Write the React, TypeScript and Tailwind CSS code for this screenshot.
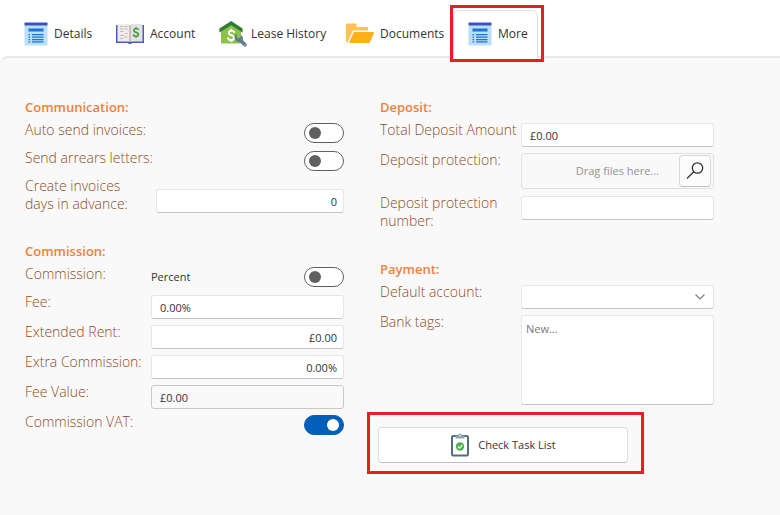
import { useState } from 'react';
import type { ReactNode } from 'react';

const fieldClass =
  'block h-6 w-full rounded-[3px] border border-[#e6e6e6] border-b-[#c4c4c4] bg-white px-2 text-[11px] text-[#333333] outline-none';

function DetailsIcon() {
  return (
    <svg className="h-6 w-6 shrink-0" viewBox="0 0 24 24">
      <path fill="#bbdefb" d="M0.5 3h23v20.5h-23z" />
      <path fill="#3f51b5" d="M0.5 0.5h23v3h-23z" />
      <path fill="#1976d2" d="M4.5 6.5h15v3h-15z" />
      <path fill="#1976d2" d="M8 12h11.500v1.300H8zM8 14.500h11.500v1.300H8zM8 17h11.500v1.300H8zM8 19.300h11.500v1.200H8z" />
      <path fill="#1976d2" d="M4.500 12h1.600v1.300H4.500zM4.500 14.500h1.600v1.300H4.500zM4.500 17h1.600v1.300H4.500zM4.500 19.300h1.600v1.200H4.500z" />
    </svg>
  );
}

function AccountIcon() {
  return (
    <svg className="h-6 w-7 shrink-0" viewBox="0 0 28 24">
      <path fill="#4a5abf" d="M0 3h28v18H16c-.4 1.300-3.600 1.300-4 0H0z" />
      <path fill="#efebe9" d="M1.500 2h11l1.500 1v17l-1.500-.5h-11z" />
      <path fill="#e6e2e1" d="M26.500 2h-11L14 3v17l1.500-.5h11z" />
      <path fill="#b09a92" d="M13.500 3h1v17h-1z" />
      <path
        fill="none"
        stroke="#c4b8b4"
        strokeWidth="1"
        d="M4 4.500h3.500M8.500 4.500h3M4 7h3.500M8.500 7h3M4 9.500h3.500M4 13.500h4M9 11.500h2.500M4 16.500h3M8.500 15h3"
      />
      <path
        fill="none"
        stroke="#43a047"
        strokeWidth="1.700"
        d="M22.500 8c-.3-1-1-1.500-2.300-1.500-3 0-3 3.200-.2 3.800 3.200.7 3.200 4-.1 4-1.500 0-2.300-.7-2.500-1.900M20.100 5v1.500M20.100 14.300v1.500"
      />
    </svg>
  );
}

function HouseIcon() {
  return (
    <svg className="-mr-0.5 h-7 w-7 shrink-0" viewBox="0 0 28 28">
      <path fill="#8bc34a" d="M2 10L12.500 3 22 10v13.500H2z" />
      <path fill="#2e7d32" d="M12.200 1L.4 8.400v4L12.200 5.200l11.400 7.200v-4z" />
      <path
        fill="none"
        stroke="#fff"
        strokeWidth="2"
        d="M15.300 12.800c-.3-1.400-1.200-2-2.800-2-3.400 0-3.300 3.600-.3 4.300 3.800.9 3.600 5-.1 5-1.900 0-3-.9-3.200-2.500M12.300 8.700v2M12.300 20v2"
      />
      <path
        fill="#607d8b"
        d="M15.500 16.300a4.500 4.500 0 0 1 2.200-2.200v3l1.800 1.300 2.500-1.500-.2-2.200c2 1.300 2.600 3.300 1.900 5.200l4 4.200c.5 2-1 3.300-2.600 2.400l-4.200-4.300c-3.200.5-5.400-2.200-5.400-5.900z"
      />
      <circle cx="25.800" cy="25" r=".7" fill="#b0bec5" />
    </svg>
  );
}

function FolderIcon() {
  return (
    <svg className="h-6 w-7 shrink-0" viewBox="0 0 28 24">
      <path fill="#ffc353" d="M0 2.500C0 1.900.4 1.500 1 1.500h8.500c.6 0 1 .4 1 1V5H21c.7 0 1.200.4 1.200 1v2.500H7L1.500 20.500C.5 20.300 0 19.900 0 19z" />
      <path fill="#ffb019" d="M7.800 10H27c.8 0 1.200.5.9 1.200l-4 9c-.2.600-.6.900-1.200.9H2.800z" />
    </svg>
  );
}

function TaskIcon() {
  return (
    <svg className="h-6 w-5 shrink-0" viewBox="0 0 20 24">
      <rect x="2" y="3" width="16" height="19.500" rx="1.200" fill="#fff" stroke="#546e7a" strokeWidth="2" />
      <path fill="#90a4ae" d="M5.500 2.500H8a2 2 0 0 1 4 0h2.500v1.700c0 .8-.6 1.300-1.300 1.300H6.800c-.7 0-1.300-.5-1.300-1.300z" />
      <circle cx="10" cy="2.500" r=".8" fill="#fff" />
      <circle cx="10" cy="13.500" r="4.200" fill="#4caf50" />
      <path fill="none" stroke="#fff" strokeWidth="1.300" d="M7.800 13.500l1.600 1.600 2.900-3" />
    </svg>
  );
}

const tabs: { name: string; icon: ReactNode; width: string }[] = [
  { name: 'Details', icon: <DetailsIcon />, width: 'w-[92px]' },
  { name: 'Account', icon: <AccountIcon />, width: 'w-[103px]' },
  { name: 'Lease History', icon: <HouseIcon />, width: 'w-[127px]' },
  { name: 'Documents', icon: <FolderIcon />, width: 'w-[122px]' },
  { name: 'More', icon: <DetailsIcon />, width: 'w-[85px]' },
];

function Heading({ children }: { children: ReactNode }) {
  return <h2 className="mb-[5px] text-[13px] leading-[18px] font-semibold text-[#f08040]">{children}</h2>;
}

interface RowProps {
  id: string;
  label: ReactNode;
  className?: string;
  labelClass?: string;
  children: ReactNode;
}

function Row({ id, label, className = '', labelClass = 'w-[126px]', children }: RowProps) {
  return (
    <div className={`flex items-start ${className}`}>
      <label
        htmlFor={id}
        className={`shrink-0 whitespace-nowrap text-sm leading-[18px] font-light text-[#8f4c22] ${labelClass}`}
      >
        {label}
      </label>
      <div className="flex min-w-0 flex-1 items-center justify-end pt-0.5">{children}</div>
    </div>
  );
}

function Toggle({ id, defaultChecked = false }: { id: string; defaultChecked?: boolean }) {
  return (
    <input
      id={id}
      type="checkbox"
      role="switch"
      defaultChecked={defaultChecked}
      className="flex h-5 w-10 shrink-0 appearance-none items-center rounded-full border border-[#606060] bg-white px-1 before:h-3 before:w-3 before:rounded-full before:bg-[#606060] checked:justify-end checked:border-[#005fb8] checked:bg-[#005fb8] checked:before:bg-white"
    />
  );
}

export default function App() {
  const [activeTab, setActiveTab] = useState('More');

  return (
    <div className="flex min-h-screen flex-col bg-white font-['Open_Sans','Noto_Sans',sans-serif] text-[11px] text-[#333333]">
      {/* Tabs */}
      <div role="tablist" className="flex pt-2.5 pl-[9px]">
        {tabs.map((tab) => (
          <div key={tab.name} className={`relative ${tab.width}`}>
            <button
              role="tab"
              aria-selected={activeTab === tab.name}
              onClick={() => setActiveTab(tab.name)}
              className={`relative -mb-0.5 flex h-12 w-full items-center gap-1.5 rounded-t-md border pl-3.5 text-xs whitespace-nowrap ${
                activeTab === tab.name
                  ? 'z-10 border-[#e0e0e0] border-b-white bg-white'
                  : 'border-transparent'
              }`}
            >
              {tab.icon}
              {tab.name}
            </button>
            {tab.name === 'More' && (
              <div className="pointer-events-none absolute -top-[5px] -right-1.5 -bottom-1.5 -left-[3px] z-20 border-3 border-[#ed1c24]" />
            )}
          </div>
        ))}
      </div>

      {/* Panel */}
      <main className="grid flex-1 grid-cols-[319fr_334fr] content-start gap-9 rounded-tl-lg border-t-2 border-[#e8e8e8] bg-[#f9f9f9] pt-10 pr-[66px] pb-8 pl-[25px]">
        <div>
          <section>
            <Heading>Communication:</Heading>
            <Row id="auto-send" label="Auto send invoices:" className="h-7">
              <Toggle id="auto-send" />
            </Row>
            <Row id="arrears" label="Send arrears letters:" className="h-7">
              <Toggle id="arrears" />
            </Row>
            <Row
              id="days"
              label={<>Create invoices<br />days in advance:</>}
              labelClass="w-[131px]"
            >
              <input id="days" defaultValue="0" className={`${fieldClass} mt-2.5 pr-1.5 text-right`} />
            </Row>
          </section>

          <section className="mt-[29px]">
            <Heading>Commission:</Heading>
            <Row id="commission" label="Commission:" className="h-7">
              <span className="flex-1">Percent</span>
              <Toggle id="commission" />
            </Row>
            <Row id="fee" label="Fee:" className="h-[30px]">
              <input id="fee" defaultValue="0.00%" className={fieldClass} />
            </Row>
            <Row id="rent" label="Extended Rent:" className="h-[30px]">
              <input id="rent" defaultValue="£0.00" className={`${fieldClass} pr-1.5 text-right`} />
            </Row>
            <Row id="extra" label="Extra Commission:" className="h-[30px]">
              <input id="extra" defaultValue="0.00%" className={`${fieldClass} pr-1.5 text-right`} />
            </Row>
            <Row id="fee-value" label="Fee Value:" className="h-[30px]">
              <input
                id="fee-value"
                readOnly
                value="£0.00"
                className="block h-6 w-full rounded-[3px] border border-[#c8c8c8] bg-[#f9f9f9] px-2 text-[11px] outline-none"
              />
            </Row>
            <Row id="vat" label="Commission VAT:" className="h-[30px]">
              <Toggle id="vat" defaultChecked />
            </Row>
          </section>
        </div>

        <div>
          <section>
            <Heading>Deposit:</Heading>
            <Row id="total" label="Total Deposit Amount" className="h-[30px]" labelClass="w-[141px]">
              <input id="total" defaultValue="£0.00" className={fieldClass} />
            </Row>
            <Row id="protection" label="Deposit protection:" className="h-[43px]" labelClass="w-[141px]">
              <div className="flex h-9 w-full items-center justify-end rounded-[3px] border border-[#e0e0e0] pr-0.5">
                <span className="mr-5 text-[#929292]">Drag files here...</span>
                <button
                  id="protection"
                  aria-label="Browse files"
                  className="flex h-8 w-8 items-center justify-center rounded border border-[#d8d8d8] border-b-[#c0c0c0] bg-[#fcfcfc]"
                >
                  <svg className="h-5 w-5" viewBox="0 0 20 20" fill="none" stroke="#333333" strokeWidth="1.300">
                    <circle cx="12.500" cy="7" r="5.200" />
                    <path d="M8.800 10.700L2 17.500" />
                  </svg>
                </button>
              </div>
            </Row>
            <Row
              id="number"
              label={<>Deposit protection<br />number:</>}
              labelClass="w-[141px]"
            >
              <input id="number" className={fieldClass} />
            </Row>
          </section>

          <section className="mt-[30px]">
            <Heading>Payment:</Heading>
            <Row id="account" label="Default account:" className="h-[30px]" labelClass="w-[141px]">
              <div className="relative w-full">
                <select id="account" className={`${fieldClass} appearance-none`}>
                  <option value=""></option>
                </select>
                <svg
                  className="pointer-events-none absolute top-1.5 right-2 h-3 w-3"
                  viewBox="0 0 12 12"
                  fill="none"
                  stroke="#808080"
                  strokeWidth="1.200"
                >
                  <path d="M1.500 3.500L6 8l4.500-4.500" />
                </svg>
              </div>
            </Row>
            <Row id="tags" label="Bank tags:" labelClass="w-[141px]">
              <textarea
                id="tags"
                placeholder="New..."
                className="block h-[90px] w-full resize-none rounded-[3px] border border-[#e6e6e6] border-b-[#c4c4c4] bg-white px-1 py-1 text-[11px] leading-[18px] outline-none placeholder:text-[#767676]"
              />
            </Row>
          </section>

          <div className="relative mt-[22px] -ml-0.5 w-[250px]">
            <button className="flex h-9 w-full items-center justify-center gap-2 rounded border border-[#dedede] border-b-[#c0c0c0] bg-white">
              <TaskIcon />
              Check Task List
            </button>
            <div className="pointer-events-none absolute -top-[15px] -right-4 -bottom-[11px] -left-[11px] border-3 border-[#ed1c24]" />
          </div>
        </div>
      </main>
    </div>
  );
}
